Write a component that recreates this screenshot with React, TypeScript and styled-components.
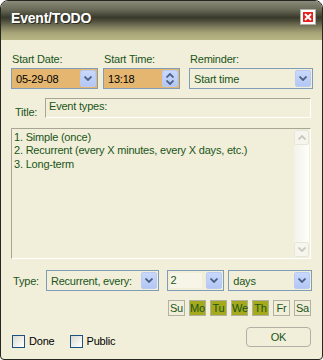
import React from 'react';
import styled, { createGlobalStyle } from 'styled-components';

const Global = createGlobalStyle`
  html, body {
    margin: 0;
    padding: 0;
    background: #fff;
  }
  * {
    box-sizing: border-box;
  }
`;

const green = '#1b551b';

function Chevron({ up }: { up?: boolean }) {
  return (
    <svg width="8" height="5" viewBox="0 0 8 5">
      <path
        d={up ? 'M0.5 4.5 L4 1 L7.5 4.5' : 'M0.5 0.5 L4 4 L7.5 0.5'}
        fill="none"
        stroke="#4d6185"
        strokeWidth="1.8"
      />
    </svg>
  );
}

function Combo({ value, width, bg, color, edit }: { value: string; width: number; bg?: string; color?: string; edit?: boolean }) {
  return (
    <ComboBox $width={width} $bg={bg}>
      {edit ? <EditText>{value}</EditText> : <ComboText $color={color}>{value}</ComboText>}
      <DropBtn>
        <Chevron />
      </DropBtn>
    </ComboBox>
  );
}

const days = [
  { d: 'Su', on: false },
  { d: 'Mo', on: true },
  { d: 'Tu', on: true },
  { d: 'We', on: true },
  { d: 'Th', on: true },
  { d: 'Fr', on: false },
  { d: 'Sa', on: false },
];

function App() {
  return (
    <>
      <Global />
      <Window>
        <TitleBar>
          <TitleText>Event/TODO</TitleText>
          <CloseBtn>
            <CloseRed>
              <svg width="8" height="8" viewBox="0 0 8 8">
                <path d="M1 1 L7 7 M7 1 L1 7" stroke="#fff" strokeWidth="2" />
              </svg>
            </CloseRed>
          </CloseBtn>
        </TitleBar>
        <Body>
          <TopRow>
            <Field>
              <Label>Start Date:</Label>
              <Combo value="05-29-08" width={87} bg="#e4b66f" color="#000" />
            </Field>
            <Field>
              <Label>Start Time:</Label>
              <ComboBox $width={77} $bg="#e4b66f">
                <ComboText $color="#000">13:18</ComboText>
                <SpinBtn>
                  <Chevron up />
                  <Chevron />
                </SpinBtn>
              </ComboBox>
            </Field>
            <Field>
              <Label>Reminder:</Label>
              <Combo value="Start time" width={124} />
            </Field>
          </TopRow>
          <TitleRow>
            <RowLabel>Title:</RowLabel>
            <ReadBox>Event types:</ReadBox>
          </TitleRow>
          <Notes>
            <NotesText>
              <div>1. Simple (once)</div>
              <div>2. Recurrent (every X minutes, every X days, etc.)</div>
              <div>3. Long-term</div>
            </NotesText>
            <ScrollBar>
              <ScrollArrow>
                <svg width="8" height="5" viewBox="0 0 8 5">
                  <path d="M0.5 4.5 L4 1 L7.5 4.5" fill="none" stroke="#c9c7ba" strokeWidth="1.8" />
                </svg>
              </ScrollArrow>
              <ScrollArrow>
                <svg width="8" height="5" viewBox="0 0 8 5">
                  <path d="M0.5 0.5 L4 4 L7.5 0.5" fill="none" stroke="#c9c7ba" strokeWidth="1.8" />
                </svg>
              </ScrollArrow>
            </ScrollBar>
          </Notes>
          <TypeRow>
            <TypeLabel>Type:</TypeLabel>
            <Combo value="Recurrent, every:" width={113} />
            <Spacer $w={9} />
            <Combo value="2" width={57} edit />
            <Spacer $w={4} />
            <Combo value="days" width={84} />
          </TypeRow>
          <DaysRow>
            {days.map((x) => (
              <Day key={x.d} $on={x.on}>{x.d}</Day>
            ))}
          </DaysRow>
          <BottomRow>
            <Check>
              <CheckBox />
              Done
            </Check>
            <Check>
              <CheckBox />
              Public
            </Check>
            <OkButton>OK</OkButton>
          </BottomRow>
        </Body>
      </Window>
    </>
  );
}

const Window = styled.div`
  width: 323px;
  height: 360px;
  display: flex;
  flex-direction: column;
  border: 1px solid #262620;
  border-radius: 8px 8px 4px 4px;
  overflow: hidden;
  background: #f1efd9;
  font-family: 'Liberation Sans', Arial, sans-serif;
  font-size: 11px;
  letter-spacing: -0.2px;
`;

const TitleBar = styled.div`
  height: 39px;
  flex: none;
  display: flex;
  align-items: center;
  justify-content: space-between;
  padding: 0 6px 5px 10px;
  background: linear-gradient(
    to bottom,
    #8a8a7a 0%,
    #6a6a58 22%,
    #3a3a2c 42%,
    #4a4a38 50%,
    #7d7b5c 66%,
    #a8a578 82%,
    #b8b585 100%
  );
`;

const TitleText = styled.div`
  color: #fff;
  font-family: 'Liberation Sans', Arial, sans-serif;
  font-weight: bold;
  font-size: 14px;
  letter-spacing: -0.2px;
  text-shadow: 1px 1px 0 #2e2e24;
`;

const CloseBtn = styled.div`
  width: 16px;
  height: 16px;
  border: 1px solid #b0b0a8;
  background: #fff;
  display: flex;
  align-items: center;
  justify-content: center;
  margin-top: -3px;
`;

const CloseRed = styled.div`
  width: 10px;
  height: 10px;
  background: #e5201c;
  display: flex;
  align-items: center;
  justify-content: center;
`;

const Body = styled.div`
  flex: 1;
  display: flex;
  flex-direction: column;
  padding: 13px 10px 0 10px;
`;

const TopRow = styled.div`
  display: flex;
`;

const Field = styled.div`
  display: flex;
  flex-direction: column;
  margin-right: 5px;
  &:nth-child(2) {
    margin-right: 9px;
  }
`;

const Label = styled.div`
  color: ${green};
  line-height: 13px;
  margin: 0 0 2px 1px;
`;

const ComboBox = styled.div<{ $width: number; $bg?: string }>`
  width: ${(p) => p.$width}px;
  height: 21px;
  border: 1px solid #7f9db9;
  background: ${(p) => p.$bg || '#f1efd9'};
  display: flex;
  align-items: center;
  padding: 1px;
`;

const ComboText = styled.div<{ $color?: string }>`
  flex: 1;
  padding-left: 3px;
  color: ${(p) => p.$color || green};
  white-space: nowrap;
  overflow: hidden;
`;

const EditText = styled.div`
  flex: 1;
  height: 15px;
  margin: 0 4px 0 1px;
  line-height: 15px;
  background: #f6f5e8;
  color: ${green};
`;

const DropBtn = styled.div`
  width: 16px;
  height: 17px;
  border-radius: 2px;
  background: linear-gradient(to bottom, #c9d8fc, #b3c7f5);
  border: 1px solid #b9cbf3;
  display: flex;
  align-items: center;
  justify-content: center;
`;

const SpinBtn = styled(DropBtn)`
  flex-direction: column;
  gap: 2px;
`;

const TitleRow = styled.div`
  display: flex;
  align-items: flex-end;
  margin-top: 9px;
`;

const RowLabel = styled.div`
  color: ${green};
  width: 34px;
  padding-left: 4px;
  line-height: 13px;
  margin-bottom: -1px;
`;

const ReadBox = styled.div`
  flex: 1;
  height: 20px;
  margin-right: 1px;
  border: 1px solid #a7a594;
  border-right-color: #fff;
  border-bottom-color: #fff;
  color: ${green};
  padding: 1px 3px;
  line-height: 13px;
`;

const Notes = styled.div`
  margin-top: 10px;
  height: 131px;
  border: 1px solid #a7a594;
  border-right-color: #fff;
  border-bottom-color: #fff;
  display: flex;
  padding: 1px 1px 1px 0;
  width: 300px;
`;

const NotesText = styled.div`
  flex: 1;
  color: ${green};
  line-height: 13.4px;
  padding: 1px 0 0 2px;
  white-space: nowrap;
`;

const ScrollBar = styled.div`
  width: 15px;
  display: flex;
  flex-direction: column;
  justify-content: space-between;
  background: linear-gradient(to right, #f3f2ea, #fefefb);
`;

const ScrollArrow = styled.div`
  height: 15px;
  border: 1px solid #e8e6d8;
  border-radius: 2px;
  background: #f6f5ee;
  display: flex;
  align-items: center;
  justify-content: center;
`;

const TypeRow = styled.div`
  display: flex;
  align-items: center;
  margin-top: 11px;
`;

const TypeLabel = styled.div`
  color: ${green};
  width: 35px;
  padding-left: 2px;
`;

const Spacer = styled.div<{ $w: number }>`
  width: ${(p) => p.$w}px;
`;

const DaysRow = styled.div`
  display: flex;
  justify-content: flex-end;
  gap: 4px;
  margin-top: 9px;
  padding-right: 1px;
`;

const Day = styled.div<{ $on: boolean }>`
  width: 17px;
  height: 16px;
  border: 1px solid #b3b1a4;
  background: ${(p) => (p.$on ? '#a5a91c' : '#f1efd9')};
  color: ${green};
  font-size: 11px;
  line-height: 14px;
  text-align: center;
`;

const BottomRow = styled.div`
  display: flex;
  align-items: flex-end;
  margin-top: 11px;
`;

const Check = styled.div`
  display: flex;
  align-items: center;
  gap: 4px;
  margin-right: 14px;
  color: #000;
  font-size: 11px;
  line-height: 13px;
  padding-left: 1px;
`;

const CheckBox = styled.div`
  width: 13px;
  height: 13px;
  border: 1px solid #1c5180;
  background: linear-gradient(135deg, #dcdbd0, #fff);
`;

const OkButton = styled.div`
  margin-left: auto;
  margin-right: 1px;
  margin-bottom: 1px;
  width: 65px;
  height: 20px;
  border: 1px solid #b1b0a6;
  border-radius: 4px;
  color: ${green};
  display: flex;
  align-items: center;
  justify-content: center;
  font-size: 11px;
`;

export default App;
